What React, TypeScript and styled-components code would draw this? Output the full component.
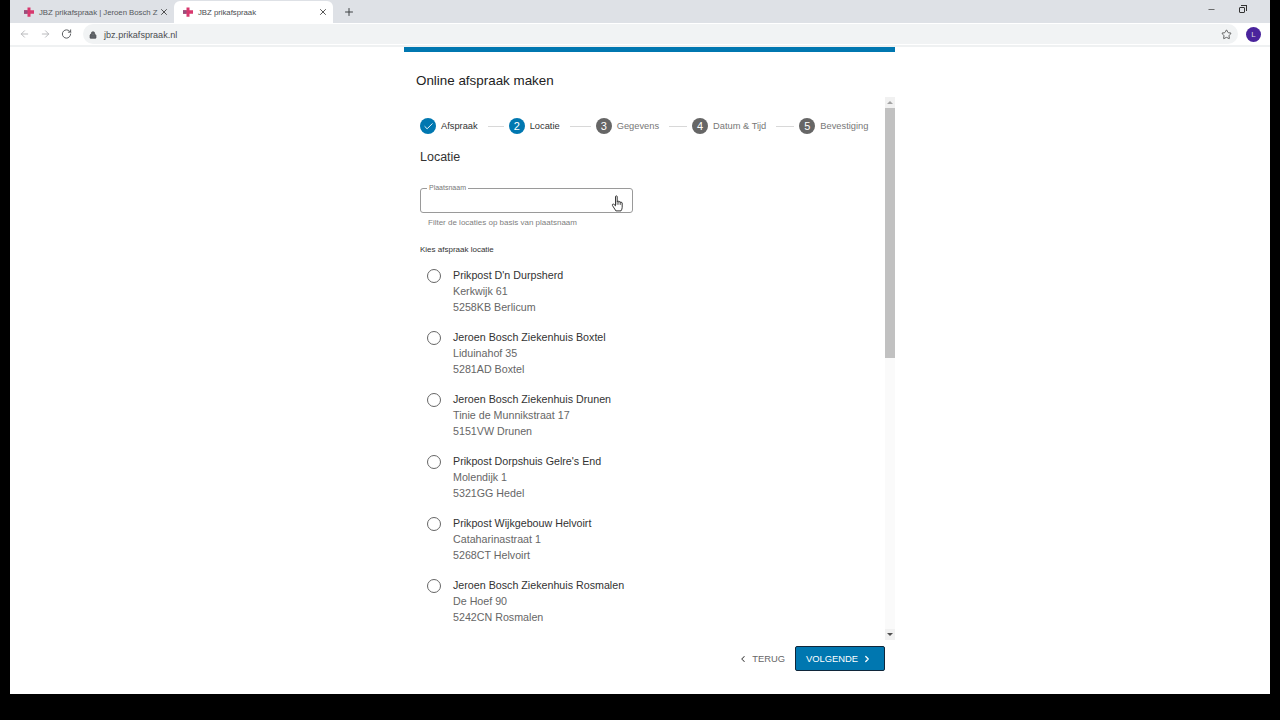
import styled, { createGlobalStyle } from "styled-components";
import { ArrowLeft, ArrowRight, Check, ChevronLeft, ChevronRight, Lock, Minus, Plus, RotateCw, Star, X } from "lucide-react";

const GlobalStyle = createGlobalStyle`
  html, body { margin: 0; padding: 0; background: #000; }
  body { font-family: "Liberation Sans", Arial, sans-serif; }
  * { box-sizing: border-box; }
`;

const Screen = styled.div`
  width: 1280px;
  height: 720px;
  padding: 0 10px 26px;
  background: #000;
  overflow: hidden;
`;
const Browser = styled.div`
  height: 100%;
  display: flex;
  flex-direction: column;
  background: #fff;
`;
const TabStrip = styled.div`
  height: 23px;
  flex: none;
  display: flex;
  align-items: flex-end;
  padding-left: 5px;
  background: #dee1e6;
`;
const Tab = styled.div<{ $active?: boolean }>`
  width: 159px;
  height: 22px;
  display: flex;
  align-items: center;
  padding: 0 5px 0 8px;
  gap: 4px;
  font-size: 7.8px;
  color: ${(p) => (p.$active ? "#4a4c50" : "#55585c")};
  background: ${(p) => (p.$active ? "#fff" : "transparent")};
  border-radius: 6px 6px 0 0;
`;
const TabTitle = styled.span`
  flex: 1;
  min-width: 0;
  white-space: nowrap;
  letter-spacing: -0.03px;
`;
const NewTab = styled.div`
  width: 24px;
  height: 22px;
  margin-left: 4px;
  display: flex;
  align-items: center;
  justify-content: center;
  color: #3c4043;
`;
const WindowControls = styled.div`
  margin-left: auto;
  height: 22px;
  display: flex;
  align-items: flex-start;
  gap: 23px;
  padding: 4px 25px 0 0;
  color: #444;
`;
const RestoreIcon = styled.div`
  position: relative;
  width: 6px;
  height: 6px;
  margin-top: 2px;
  border: 1px solid #333;
  border-radius: 1px;
  &::after {
    content: "";
    position: absolute;
    top: -3px;
    right: -3px;
    width: 5px;
    height: 5px;
    border-top: 1px solid #333;
    border-right: 1px solid #333;
  }
`;
const Toolbar = styled.div`
  height: 22px;
  flex: none;
  display: flex;
  align-items: center;
  padding: 0 9px;
  gap: 10px;
  background: #fff;
  color: #5f6368;
`;
const NavIcon = styled.div<{ $off?: boolean }>`
  width: 11px;
  display: flex;
  justify-content: center;
  color: ${(p) => (p.$off ? "#b3b5b8" : "#4e5154")};
`;
const Omnibox = styled.div`
  flex: 1;
  height: 20px;
  display: flex;
  align-items: center;
  gap: 7px;
  margin: 0 -2px 0 1px;
  padding: 1px 6px 0 6px;
  font-size: 9.1px;
  color: #4b4d50;
  background: #f1f3f4;
  border-radius: 10px;
`;
const StarSlot = styled.div`
  margin-left: auto;
  display: flex;
  color: #555;
`;
const Avatar = styled.div`
  width: 15px;
  height: 15px;
  display: flex;
  align-items: center;
  justify-content: center;
  font-size: 8px;
  color: #ddd;
  background: #4a249c;
  border-radius: 50%;
`;
const Page = styled.div`
  flex: 1;
  min-height: 0;
  display: flex;
  justify-content: center;
  border-top: 2px solid #eff1f2;
`;
const Card = styled.main`
  width: 491px;
  margin-left: 19px;
  display: flex;
  flex-direction: column;
  border-top: 5px solid #0077b0;
`;
const Heading = styled.h1`
  margin: 0;
  padding: 21px 0 0 12px;
  height: 45px;
  font-size: 13.4px;
  line-height: 16px;
  font-weight: 400;
  color: #222;
`;
const Panel = styled.div`
  height: 543px;
  flex: none;
  display: flex;
  padding-left: 12px;
`;
const Content = styled.div`
  flex: 1;
  min-width: 0;
  overflow: hidden;
  padding: 20px 0 0 4px;
`;
const Stepper = styled.ol`
  list-style: none;
  margin: 0;
  padding: 0;
  height: 18px;
  display: flex;
  align-items: center;
`;
const Step = styled.li`
  display: flex;
  align-items: center;
  gap: 5px;
`;
const StepDot = styled.div<{ $on?: boolean }>`
  width: 16px;
  height: 16px;
  display: flex;
  align-items: center;
  justify-content: center;
  font-size: 11px;
  color: #fff;
  background: ${(p) => (p.$on ? "#0077b0" : "#666")};
  border-radius: 50%;
`;
const StepLabel = styled.span<{ $on?: boolean }>`
  font-size: 9.3px;
  color: ${(p) => (p.$on ? "#333" : "#777")};
  white-space: nowrap;
`;
const Connector = styled.div<{ $w: number }>`
  width: ${(p) => p.$w}px;
  height: 1px;
  margin: 0 5px;
  background: #d8d8d8;
`;
const SectionTitle = styled.h2`
  margin: 14px 0 0;
  font-size: 12.5px;
  line-height: 16px;
  font-weight: 400;
  color: #333;
`;
const Field = styled.fieldset`
  width: 213px;
  height: 29px;
  margin: 19px 0 0;
  padding: 0 0 0 6px;
  border: 1px solid #9a9a9a;
  border-radius: 3px;
`;
const FieldLegend = styled.legend`
  padding: 0 2px;
  font-size: 7px;
  line-height: 8px;
  color: #777;
`;
const HelpText = styled.p`
  margin: 4px 0 0 8px;
  font-size: 8px;
  line-height: 12px;
  color: #808080;
`;
const GroupLabel = styled.p`
  margin: 15px 0 0;
  font-size: 8px;
  line-height: 12px;
  color: #333;
`;
const LocationList = styled.div`
  margin-top: 11px;
  display: flex;
  flex-direction: column;
  gap: 14px;
`;
const LocationRow = styled.label`
  display: flex;
  gap: 12px;
  padding-left: 7px;
  font-size: 10.7px;
  line-height: 16px;
  color: #666;
`;
const Radio = styled.span`
  width: 14px;
  height: 14px;
  margin-top: 2px;
  flex: none;
  border: 1.5px solid #666;
  border-radius: 50%;
`;
const LocationName = styled.div`
  color: #333;
`;
const Scrollbar = styled.div`
  width: 10px;
  margin-left: -1px;
  flex: none;
  display: flex;
  flex-direction: column;
  background: #fafafa;
`;
const ScrollArrow = styled.div<{ $down?: boolean }>`
  height: 11px;
  flex: none;
  display: flex;
  justify-content: center;
  align-items: center;
  margin-top: ${(p) => (p.$down ? "auto" : "0")};
  background: #f1f1f1;
  &::before {
    content: "";
    border-left: 3px solid transparent;
    border-right: 3px solid transparent;
    ${(p) => (p.$down ? "border-top: 3px solid #505050;" : "border-bottom: 3px solid #a3a3a3;")}
  }
`;
const ScrollThumb = styled.div`
  height: 250px;
  flex: none;
  background: #c1c1c1;
`;
const Footer = styled.div`
  flex: 1;
  display: flex;
  align-items: flex-start;
  justify-content: flex-end;
  gap: 10px;
  padding: 6px 10px 0 0;
`;
const BackButton = styled.button`
  height: 25px;
  padding: 0;
  display: flex;
  align-items: center;
  gap: 4px;
  font: 400 9.4px "Liberation Sans", Arial, sans-serif;
  color: #666;
  background: none;
  border: 0;
`;
const NextButton = styled.button`
  width: 90px;
  height: 25px;
  padding: 0 2px 0 0;
  display: flex;
  align-items: center;
  justify-content: center;
  gap: 4px;
  font: 400 9.4px "Liberation Sans", Arial, sans-serif;
  color: #fff;
  background: #0077b0;
  border: 1px solid #10263a;
  border-radius: 2px;
`;
const Pointer = styled.svg`
  position: absolute;
  left: 611px;
  top: 195px;
`;

const JbzIcon = () => (
  <svg width="12" height="12" viewBox="0 0 12 12">
    <path d="M4.500 1.500h3v2.800h3.500v3.400H7.500v3h-3v-3h-3.500V4.300h3.500z" fill="#d8386e" />
    <path d="M1 4.300h3.500v3.400H1z" fill="#96507c" />
  </svg>
);

const steps = [
  { label: "Afspraak", on: true, done: true, line: 16 },
  { label: "Locatie", on: true, line: 21 },
  { label: "Gegevens", line: 18 },
  { label: "Datum & Tijd", line: 18 },
  { label: "Bevestiging" },
];

const locations = [
  ["Prikpost D'n Durpsherd", "Kerkwijk 61", "5258KB Berlicum"],
  ["Jeroen Bosch Ziekenhuis Boxtel", "Liduinahof 35", "5281AD Boxtel"],
  ["Jeroen Bosch Ziekenhuis Drunen", "Tinie de Munnikstraat 17", "5151VW Drunen"],
  ["Prikpost Dorpshuis Gelre's End", "Molendijk 1", "5321GG Hedel"],
  ["Prikpost Wijkgebouw Helvoirt", "Cataharinastraat 1", "5268CT Helvoirt"],
  ["Jeroen Bosch Ziekenhuis Rosmalen", "De Hoef 90", "5242CN Rosmalen"],
];

export default function App() {
  return (
    <Screen>
      <GlobalStyle />
      <Browser>
        <TabStrip>
          <Tab>
            <JbzIcon />
            <TabTitle>JBZ prikafspraak | Jeroen Bosch Z</TabTitle>
            <X size={10} color="#333" />
          </Tab>
          <Tab $active>
            <JbzIcon />
            <TabTitle>JBZ prikafspraak</TabTitle>
            <X size={10} color="#333" />
          </Tab>
          <NewTab>
            <Plus size={12} />
          </NewTab>
          <WindowControls>
            <Minus size={9} />
            <RestoreIcon />
          </WindowControls>
        </TabStrip>
        <Toolbar>
          <NavIcon $off>
            <ArrowLeft size={12} />
          </NavIcon>
          <NavIcon $off>
            <ArrowRight size={12} />
          </NavIcon>
          <NavIcon>
            <RotateCw size={12} />
          </NavIcon>
          <Omnibox>
            <Lock size={8} fill="#5f6368" />
            jbz.prikafspraak.nl
            <StarSlot>
              <Star size={11} />
            </StarSlot>
          </Omnibox>
          <Avatar>L</Avatar>
        </Toolbar>
        <Page>
          <Card>
            <Heading>Online afspraak maken</Heading>
            <Panel>
              <Content>
                <Stepper>
                  {steps.map((s, i) => (
                    <Step key={s.label}>
                      <StepDot $on={s.on}>{s.done ? <Check size={11} strokeWidth={2} /> : i + 1}</StepDot>
                      <StepLabel $on={s.on}>{s.label}</StepLabel>
                      {s.line && <Connector $w={s.line} />}
                    </Step>
                  ))}
                </Stepper>
                <SectionTitle>Locatie</SectionTitle>
                <Field>
                  <FieldLegend>Plaatsnaam</FieldLegend>
                </Field>
                <HelpText>Filter de locaties op basis van plaatsnaam</HelpText>
                <GroupLabel>Kies afspraak locatie</GroupLabel>
                <LocationList>
                  {locations.map(([name, street, city]) => (
                    <LocationRow key={name}>
                      <Radio />
                      <div>
                        <LocationName>{name}</LocationName>
                        <div>{street}</div>
                        <div>{city}</div>
                      </div>
                    </LocationRow>
                  ))}
                </LocationList>
              </Content>
              <Scrollbar>
                <ScrollArrow />
                <ScrollThumb />
                <ScrollArrow $down />
              </Scrollbar>
            </Panel>
            <Footer>
              <BackButton>
                <ChevronLeft size={10} strokeWidth={2.500} color="#444" />
                TERUG
              </BackButton>
              <NextButton>
                VOLGENDE
                <ChevronRight size={10} strokeWidth={3} />
              </NextButton>
            </Footer>
          </Card>
        </Page>
      </Browser>
      <Pointer width="14" height="18" viewBox="0 0 14 18">
        <path
          d="M4.500 1.600c0-1 1.700-1 1.700 0v5.200c.1-1.100 1.600-1.100 1.700 0v.5c.1-1 1.600-1 1.700 0v.6c.1-.8 1.500-.8 1.600.1v4.300c0 1.400-.5 2.400-1.200 3.600H4.900L1.500 10.600c-.7-1 .4-2 1.400-1.300l1.600 1.500z"
          fill="#fff"
          stroke="#222"
          strokeWidth="0.9"
        />
        <path d="M6.200 6.800v3M7.900 7.300v2.500M9.600 7.900v2" stroke="#333" strokeWidth="0.7" fill="none" />
      </Pointer>
    </Screen>
  );
}
